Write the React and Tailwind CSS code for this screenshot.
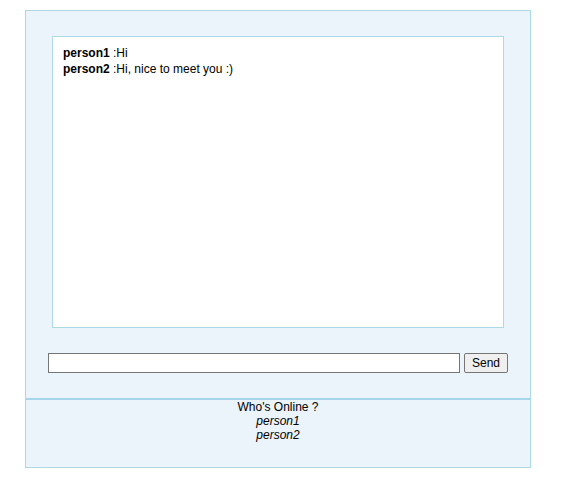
import { useState } from "react";

const messages = [
  { user: "person1", text: "Hi" },
  { user: "person2", text: "Hi, nice to meet you :)" },
];

const online = ["person1", "person2"];

function App() {
  const [draft, setDraft] = useState("");

  return (
    <div className="min-h-screen bg-white pt-[10px] pl-[25px] font-['Liberation_Sans',Arial,sans-serif] text-[12px] text-black">
      <div className="w-[506px] border border-[#add8e6] bg-[#ebf3fb]">
        <div className="border-b border-[#a6d5ec] pt-[25px] pb-[25px]">
          <div className="mx-[26px] h-[292px] border border-[#add8e6] bg-white px-[10px] pt-[8px]">
            {messages.map((m, i) => (
              <div key={i} className="leading-[16px]">
                <span className="font-bold">{m.user}</span> :{m.text}
              </div>
            ))}
          </div>
          <div className="mt-[25px] flex items-center gap-[4px] px-[22px]">
            <input
              value={draft}
              onChange={(e) => setDraft(e.target.value)}
              className="h-[20px] w-[412px] border border-[#767676] bg-white px-[2px] text-[13px] outline-none"
            />
            <button className="h-[20px] w-[44px] rounded-[2px] border border-[#767676] bg-[#efefef] text-[12px] leading-none">
              Send
            </button>
          </div>
        </div>
        <div className="h-[68px] border-t border-[#a6d5ec] text-center leading-[14px]">
          <div>Who's Online ?</div>
          {online.map((name) => (
            <div key={name} className="italic">
              {name}
            </div>
          ))}
        </div>
      </div>
    </div>
  );
}

export default App;
